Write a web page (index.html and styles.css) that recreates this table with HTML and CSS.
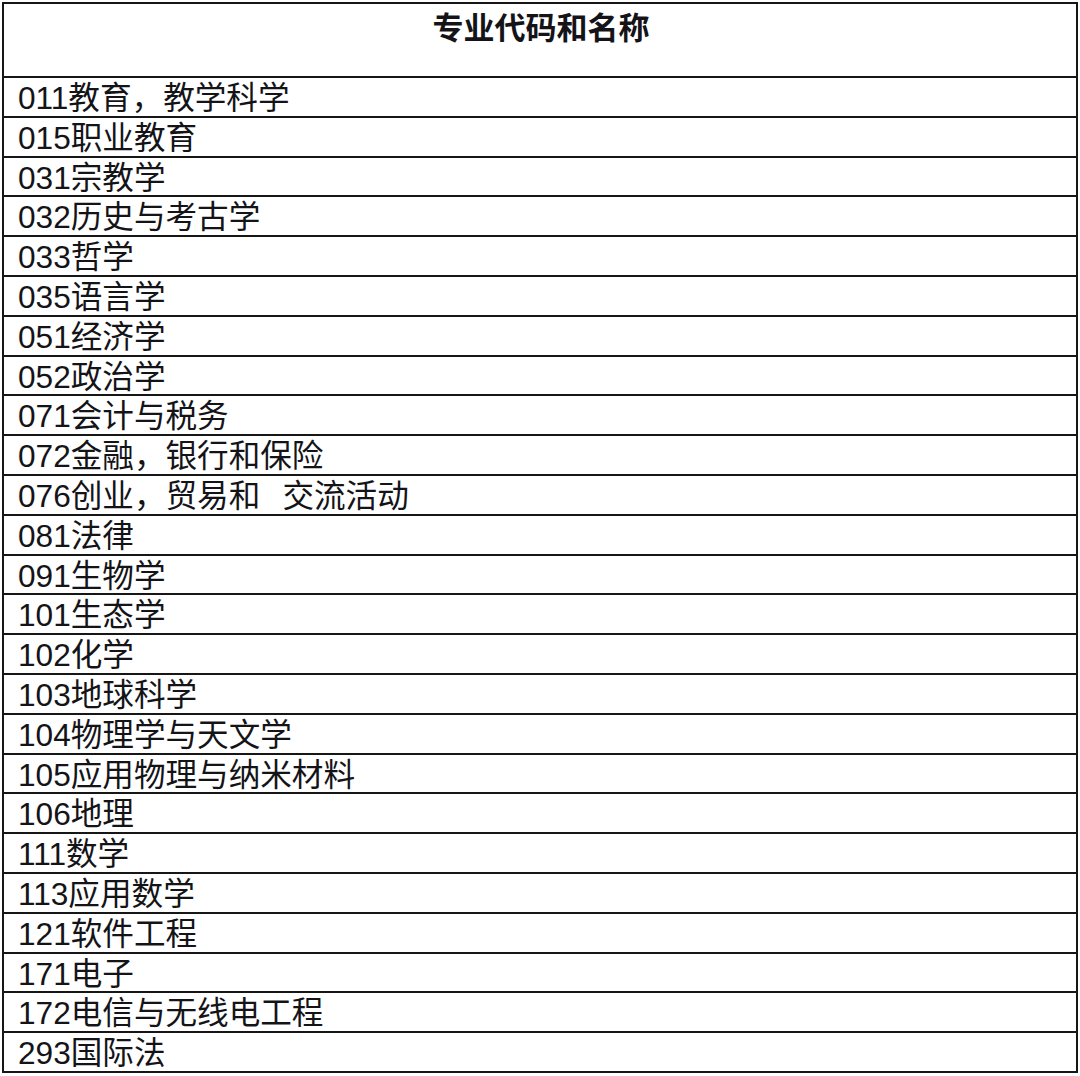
FILE: index.html
```html
<!DOCTYPE html>
<html lang="zh-CN">
<head>
<meta charset="utf-8">
<title>专业代码和名称</title>
<link rel="stylesheet" href="styles.css">
</head>
<body>
<div class="sheet">
  <div class="head">专业代码和名称</div>
  <div class="row">011教育，教学科学</div>
  <div class="row">015职业教育</div>
  <div class="row">031宗教学</div>
  <div class="row">032历史与考古学</div>
  <div class="row">033哲学</div>
  <div class="row">035语言学</div>
  <div class="row">051经济学</div>
  <div class="row">052政治学</div>
  <div class="row">071会计与税务</div>
  <div class="row">072金融，银行和保险</div>
  <div class="row">076创业，贸易和&#8194;&#8201;交流活动</div>
  <div class="row">081法律</div>
  <div class="row">091生物学</div>
  <div class="row">101生态学</div>
  <div class="row">102化学</div>
  <div class="row">103地球科学</div>
  <div class="row">104物理学与天文学</div>
  <div class="row">105应用物理与纳米材料</div>
  <div class="row">106地理</div>
  <div class="row">111数学</div>
  <div class="row">113应用数学</div>
  <div class="row">121软件工程</div>
  <div class="row">171电子</div>
  <div class="row">172电信与无线电工程</div>
  <div class="row">293国际法</div>
</div>
</body>
</html>
```
FILE: styles.css
```css
html, body {
  margin: 0;
  padding: 0;
  background: #ffffff;
}

body {
  font-family: "Liberation Sans", "Noto Sans CJK SC", sans-serif;
  color: #141418;
}

.sheet {
  margin: 2px 0 0 2px;
  width: 1076px;
  box-sizing: border-box;
  border: 2px solid #161616;
  display: flex;
  flex-direction: column;
}

.head {
  height: 72px;
  border-bottom: 2px solid #161616;
  text-align: center;
  font-family: "Noto Sans CJK SC", sans-serif;
  font-weight: 700;
  font-size: 31px;
  line-height: 44px;
  padding-left: 2px;
}

.row {
  height: 37.8px;
  border-bottom: 2px solid #161616;
  padding-left: 14px;
  font-size: 31.6px;
  line-height: 41px;
  white-space: nowrap;
  overflow: hidden;
}

.row:last-child {
  border-bottom: none;
}
```
